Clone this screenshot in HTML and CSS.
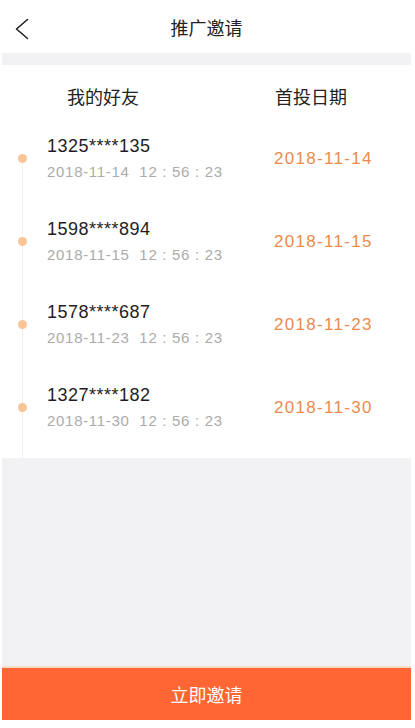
FILE: index.html
```html
<!DOCTYPE html>
<html lang="zh-CN">
<head>
    <meta charset="utf-8">
    <title>推广邀请</title>
    <link rel="stylesheet" href="styles.css">
</head>
<body>
    <div class="page">
        <div class="top-bar">
            <a class="back" href="#">
                <svg width="14" height="22" viewBox="0 0 14 22">
                    <polyline points="12.5,1.5 1.5,11 12.5,20.5" fill="none" stroke="#222" stroke-width="1.6" stroke-linejoin="round" stroke-linecap="round"/>
                </svg>
            </a>
            <h1>推广邀请</h1>
        </div>
        <div class="gap"></div>
        <div class="friends">
            <div class="friends-head">
                <div class="col-name">我的好友</div>
                <div class="col-date">首投日期</div>
            </div>
            <div class="timeline" id="lista">
            </div>
        </div>
        <div class="filler"></div>
        <a class="invite" href="#">立即邀请</a>
    </div>
    <script>
        const amici = [
            { tel: "1325****135", data: "2018-11-14" },
            { tel: "1598****894", data: "2018-11-15" },
            { tel: "1578****687", data: "2018-11-23" },
            { tel: "1327****182", data: "2018-11-30" }
        ];

        const lista = document.getElementById("lista");
        for (const amico of amici) {
            const riga = document.createElement("div");
            riga.className = "row";
            riga.innerHTML = `
                <div class="who">
                    <div class="tel">${amico.tel}</div>
                    <div class="time">${amico.data}&nbsp;&nbsp;12 : 56 : 23</div>
                </div>
                <div class="first">${amico.data}</div>
            `;
            lista.appendChild(riga);
        }
    </script>
</body>
</html>
```

FILE: styles.css
```css
body {
    margin: 0;
    background-color: white;
    font-family: "Liberation Sans", "Noto Sans CJK SC", sans-serif;
}
.page {
    height: 720px;
    margin-left: 2px;
    width: 409px;
    display: flex;
    flex-direction: column;
    background-color: #f2f2f4;
}
.top-bar {
    height: 53px;
    background-color: white;
    display: flex;
    align-items: center;
    justify-content: center;
    position: relative;
}
.back {
    position: absolute;
    left: 13px;
    top: 18px;
    display: block;
    line-height: 0;
}
.top-bar h1 {
    margin: 0;
    font-family: "Noto Sans CJK SC", sans-serif;
    font-size: 18px;
    font-weight: normal;
    color: #222;
}
.gap {
    height: 12px;
}
.friends {
    background-color: white;
    padding-bottom: 9px;
}
.friends-head {
    display: grid;
    grid-template-columns: 272px 1fr;
    height: 52px;
    padding-top: 18px;
    box-sizing: border-box;
    font-family: "Noto Sans CJK SC", sans-serif;
    font-size: 18px;
    line-height: 26px;
    color: #222;
}
.col-name {
    padding-left: 65px;
}
.col-date {
    padding-left: 1px;
}
.timeline {
    position: relative;
    margin-bottom: -9px;
    padding-bottom: 9px;
}
.timeline::before {
    content: "";
    position: absolute;
    left: 20px;
    top: 41px;
    bottom: 0;
    width: 1px;
    background-color: #f7efe9;
}
.row {
    display: grid;
    grid-template-columns: 272px 1fr;
    align-items: center;
    height: 83px;
    position: relative;
}
.row::before {
    content: "";
    position: absolute;
    left: 16px;
    top: 37px;
    width: 9px;
    height: 9px;
    border-radius: 50%;
    background-color: #f9c597;
}
.who {
    padding-left: 45px;
}
.tel {
    font-size: 18px;
    line-height: 22px;
    letter-spacing: 0.5px;
    color: #1e1e1e;
}
.time {
    margin-top: 5px;
    font-size: 15px;
    line-height: 20px;
    letter-spacing: 0.7px;
    color: #ababab;
}
.first {
    font-size: 17px;
    letter-spacing: 1.3px;
    color: #ec8a4e;
}
.filler {
    flex: 1;
}
.invite {
    display: block;
    height: 52px;
    line-height: 52px;
    text-align: center;
    background-color: #ff6633;
    border-top: 2px solid #f7dccd;
    color: white;
    font-family: "Noto Sans CJK SC", sans-serif;
    font-size: 18px;
    text-decoration: none;
}
```
